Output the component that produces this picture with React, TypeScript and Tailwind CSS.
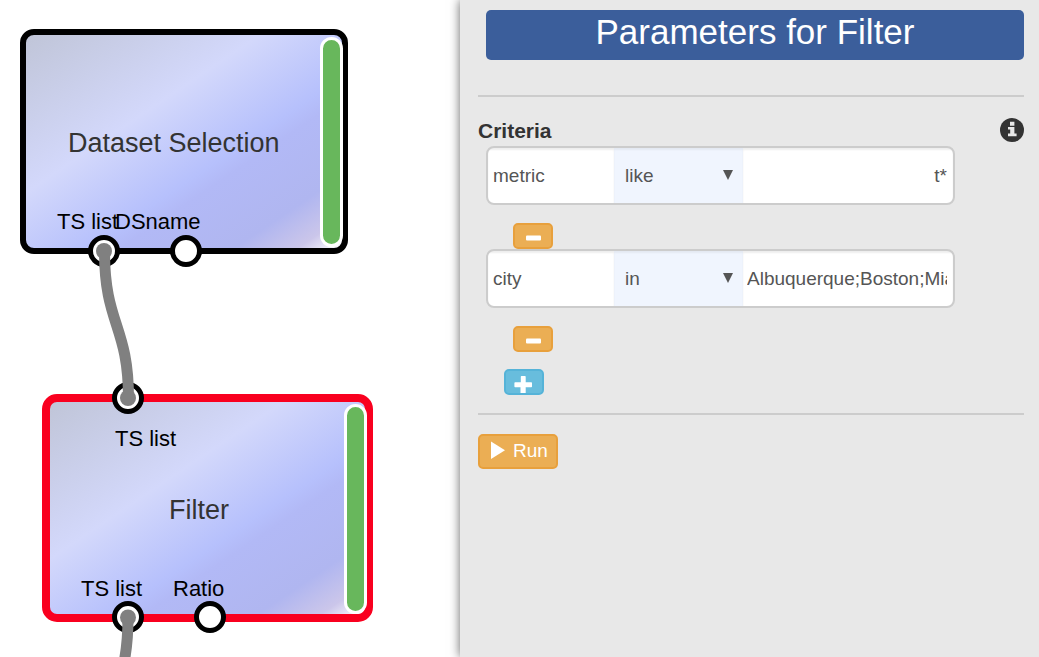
import { useState } from "react";
import type { ReactNode } from "react";

type Port = { label: string; dot: string; text: string };

type NodeProps = {
  title: string;
  frame: string;
  bar: string;
  titleClass: string;
  ports: Port[];
};

function FlowNode({ title, frame, bar, titleClass, ports }: NodeProps) {
  return (
    <section
      aria-label={title}
      className={`absolute bg-[linear-gradient(to_bottom_right,#c0c5d8_0%,#d3d8fb_37%,#b6c0fc_60%,#b2b9f6_65%,#b0b6f0_83%,#cbc6ea_93%,#fff_100%)] ${frame}`}
    >
      <h2 className={`absolute whitespace-nowrap text-[27px] leading-8 text-[#333] ${titleClass}`}>{title}</h2>
      <div className={`absolute w-[23px] rounded-full border-3 border-white bg-[#68b75c] ${bar}`} />
      {ports.map((port) => (
        <div key={port.dot}>
          <span className={`absolute whitespace-nowrap text-[22px] leading-6 text-black ${port.text}`}>{port.label}</span>
          <span className={`absolute size-8 rounded-full border-5 border-black bg-white ${port.dot}`} />
        </div>
      ))}
    </section>
  );
}

type Criterion = { id: number; field: string; operator: string; value: string };

function CriterionRow({
  item,
  onChange,
  onRemove,
}: {
  item: Criterion;
  onChange: (next: Criterion) => void;
  onRemove: () => void;
}) {
  return (
    <div className="ml-2">
      <div className="flex h-[59px] w-[469px] max-w-full overflow-hidden rounded-lg border-2 border-[#ccc] bg-white text-[19px] text-[#555]">
        <input
          aria-label="Field"
          className="w-[126px] min-w-0 px-[5px] pt-[2px] shadow-[inset_0_2px_2px_rgba(0,0,0,0.07)] outline-none"
          value={item.field}
          onChange={(e) => onChange({ ...item, field: e.target.value })}
        />
        <div className="relative w-[129px] shrink-0">
          <select
            aria-label="Operator"
            className="size-full appearance-none bg-[#f0f5fe] pt-[2px] pl-[11px] shadow-[inset_0_2px_2px_rgba(0,0,0,0.05)] outline-none"
            value={item.operator}
            onChange={(e) => onChange({ ...item, operator: e.target.value })}
          >
            <option>like</option>
            <option>in</option>
            <option>=</option>
          </select>
          <svg aria-hidden="true" viewBox="0 0 10 10" className="pointer-events-none absolute top-[22px] right-[10px] size-[10px] fill-[#555]">
            <path d="M0 0H10L5 10Z" />
          </svg>
        </div>
        <input
          aria-label="Value"
          className="min-w-0 flex-1 pt-[2px] pr-[6px] pl-1 text-right shadow-[inset_0_2px_2px_rgba(0,0,0,0.07)] outline-none"
          value={item.value}
          onChange={(e) => onChange({ ...item, value: e.target.value })}
        />
      </div>
      <SmallButton label="Remove criterion" onClick={onRemove} className="mt-[18px] ml-[27px] border-[#e8a03c] bg-[#ebae54]">
        <path d="M12 10.5h13a1 1 0 0 1 1 1v3a1 1 0 0 1-1 1h-13a1 1 0 0 1-1-1v-3a1 1 0 0 1 1-1z" />
      </SmallButton>
    </div>
  );
}

function SmallButton({
  label,
  onClick,
  className,
  children,
}: {
  label: string;
  onClick: () => void;
  className: string;
  children: ReactNode;
}) {
  return (
    <button type="button" aria-label={label} onClick={onClick} className={`block h-[26px] w-10 rounded-[5px] border-2 ${className}`}>
      <svg aria-hidden="true" viewBox="0 0 36 22" className="size-full fill-white">
        {children}
      </svg>
    </button>
  );
}

export default function App() {
  const [criteria, setCriteria] = useState<Criterion[]>([
    { id: 1, field: "metric", operator: "like", value: "t*" },
    { id: 2, field: "city", operator: "in", value: "Albuquerque;Boston;Miami" },
  ]);

  return (
    <div className="flex h-screen overflow-hidden bg-white font-['Liberation_Sans',Arial,sans-serif]">
      <main className="relative w-[460px] shrink-0 overflow-hidden">
        <FlowNode
          title="Dataset Selection"
          frame="left-5 top-[29px] h-[225px] w-[328px] rounded-[14px] border-6 border-black"
          bar="top-[2px] right-[-1px] h-[210px]"
          titleClass="top-[92px] left-[42px]"
          ports={[
            { label: "TS list", dot: "left-[62px] top-[200px]", text: "left-[31px] top-[175px]" },
            { label: "DSname", dot: "left-[144px] top-[200px]", text: "left-[89px] top-[175px]" },
          ]}
        />
        <FlowNode
          title="Filter"
          frame="left-[42px] top-[394px] h-[228px] w-[331px] rounded-[15px] border-8 border-[#f9001f]"
          bar="top-[2px] right-[-2px] h-[210px]"
          titleClass="top-[92px] left-[119px]"
          ports={[
            { label: "TS list", dot: "left-[62px] top-[-20px]", text: "left-[65px] top-[25px]" },
            { label: "TS list", dot: "left-[62px] top-[199px]", text: "left-[31px] top-[175px]" },
            { label: "Ratio", dot: "left-[144px] top-[199px]", text: "left-[123px] top-[175px]" },
          ]}
        />
        <svg aria-hidden="true" width="460" height="800" viewBox="0 0 460 800" className="pointer-events-none absolute top-0 left-0 max-w-none">
          <g fill="none" stroke="#808080" strokeWidth="11">
            <path d="M104.5 251C104.5 325 128.500 325 128.500 398.500" />
            <path d="M128 617.500C128 691 104 691 104 765" />
          </g>
          <g fill="#808080">
            <circle cx="104" cy="251" r="8" />
            <circle cx="128" cy="398" r="8" />
            <circle cx="128" cy="617.500" r="8" />
          </g>
        </svg>
      </main>

      <aside className="z-10 min-w-0 flex-1 bg-[#e8e8e8] pt-[10px] pr-[15px] pl-[18px] shadow-[0_0_10px_rgba(0,0,0,0.6)]">
        <h1 className="ml-2 h-[50px] rounded-[5px] bg-[#3b5e9b] text-center text-[35px] leading-[44px] text-white">Parameters for Filter</h1>
        <hr className="mt-[35px] border-t-2 border-[#ccc]" />
        <div className="mt-[18px] flex h-[31px] items-center justify-between">
          <h2 className="text-[21px] font-bold text-[#333]">Criteria</h2>
          <button type="button" aria-label="About criteria" className="-mt-[2px]">
            <svg aria-hidden="true" viewBox="0 0 24 24" className="size-6">
              <circle cx="12" cy="12" r="12" fill="#333" />
              <path fill="#e8e8e8" d="M10 3.800h4.400v4h-4.400zM8 9h6.400v6.500h2.200v2.700H8v-2.700h2.200v-4H8z" />
            </svg>
          </button>
        </div>
        {criteria.map((item) => (
          <CriterionRow
            key={item.id}
            item={item}
            onChange={(next) => setCriteria(criteria.map((c) => (c.id === next.id ? next : c)))}
            onRemove={() => setCriteria(criteria.filter((c) => c.id !== item.id))}
          />
        ))}
        <SmallButton
          label="Add criterion"
          onClick={() => setCriteria([...criteria, { id: Date.now(), field: "", operator: "like", value: "" }])}
          className="mt-[17px] ml-[26px] border-[#55b3d8] bg-[#68bddd]"
        >
          <path d="M15.5 5h3.500q.7 0 .7.7V11.300h5.600q.7 0 .7.7v3.600q0 .7-.7.7h-5.600V23h-5.200v-6.700H9.100q-.7 0-.7-.7V12q0-.7.7-.7h5.700V5.700q0-.7.7-.7z" />
        </SmallButton>
        <hr className="mt-[18px] border-t-2 border-[#ccc]" />
        <button type="button" className="mt-[19px] flex h-[35px] items-center gap-2 rounded-[5px] border-2 border-[#e8a03c] bg-[#ebae54] pr-2 pl-[11px] text-[19px] text-white">
          <svg aria-hidden="true" viewBox="0 0 14 18" className="-mt-1 h-[18px] w-[14px] fill-white">
            <path d="M0 .5L14 9.200L0 18Z" />
          </svg>
          Run
        </button>
      </aside>
    </div>
  );
}
